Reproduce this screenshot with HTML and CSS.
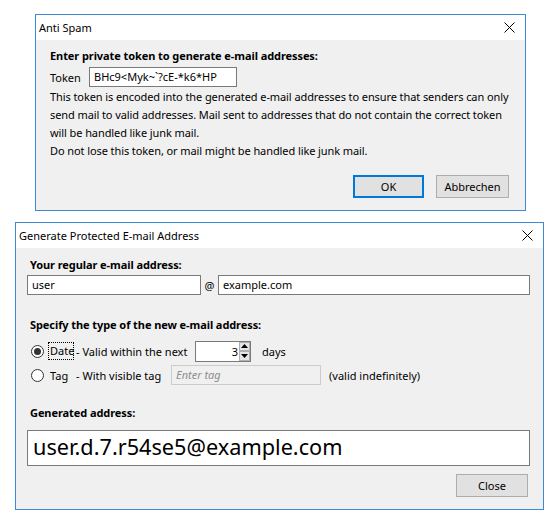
FILE: index.html
```html
<!DOCTYPE html>
<html>
<head>
<meta charset="utf-8">
<link rel="stylesheet" href="styles.css">
</head>
<body>
<div class="page">
  <div class="dialog d1">
    <div class="titlebar">
      <span class="title">Anti Spam</span>
      <svg class="close" width="11" height="11" viewBox="0 0 11 11"><path d="M0.5 0.5L10.5 10.5M10.5 0.5L0.5 10.5" stroke="#000" stroke-width="1"/></svg>
    </div>
    <div class="body b1">
      <div class="heading">Enter private token to generate e-mail addresses:</div>
      <div class="token-row">
        <span class="lbl">Token</span>
        <div class="input token-input">BHc9&lt;Myk~`?cE-*k6*HP</div>
      </div>
      <div class="para">This token is encoded into the generated e-mail addresses to ensure that senders can only<br>send mail to valid addresses. Mail sent to addresses that do not contain the correct token<br>will be handled like junk mail.<br>Do not lose this token, or mail might be handled like junk mail.</div>
      <div class="buttons b1-buttons">
        <div class="btn default w-ok">OK</div>
        <div class="btn w-abb">Abbrechen</div>
      </div>
    </div>
  </div>

  <div class="dialog d2">
    <div class="titlebar">
      <span class="title">Generate Protected E-mail Address</span>
      <svg class="close" width="11" height="11" viewBox="0 0 11 11"><path d="M0.5 0.5L10.5 10.5M10.5 0.5L0.5 10.5" stroke="#000" stroke-width="1"/></svg>
    </div>
    <div class="body b2">
      <div class="heading h-indent">Your regular e-mail address:</div>
      <div class="addr-row">
        <div class="input user-input">user</div>
        <span class="at">@</span>
        <div class="input domain-input">example.com</div>
      </div>
      <div class="heading h-indent sec2">Specify the type of the new e-mail address:</div>
      <div class="opt-row r1">
        <span class="radio checked"></span>
        <span class="focus">Date</span>
        <span class="desc">- Valid within the next</span>
        <div class="spin">
          <div class="input spin-input">3</div>
          <div class="spin-btns">
            <div class="spin-btn"><svg width="7" height="4" viewBox="0 0 7 4"><path d="M3.5 0L7 4H0Z" fill="#000"/></svg></div>
            <div class="spin-btn"><svg width="7" height="4" viewBox="0 0 7 4"><path d="M0 0H7L3.5 4Z" fill="#000"/></svg></div>
          </div>
        </div>
        <span class="days">days</span>
      </div>
      <div class="opt-row r2">
        <span class="radio"></span>
        <span class="tag">Tag</span>
        <span class="desc">- With visible tag</span>
        <div class="input tag-input">Enter tag</div>
        <span class="valid">(valid indefinitely)</span>
      </div>
      <div class="heading h-indent sec3">Generated address:</div>
      <div class="input gen-input">user.d.7.r54se5@example.com</div>
      <div class="buttons b2-buttons">
        <div class="btn w-close">Close</div>
      </div>
    </div>
  </div>
</div>
</body>
</html>
```

FILE: styles.css
```css
html, body {
  margin: 0;
  padding: 0;
  background: #ffffff;
}
body {
  font-family: "Noto Sans", "Open Sans", sans-serif;
  font-size: 11px;
  color: #000;
  width: 559px;
  height: 525px;
  overflow: hidden;
}
.page {
  display: flex;
  flex-direction: column;
  align-items: flex-start;
}
.dialog {
  border: 1px solid #3b8ad6;
  background: #f0f0f0;
  box-sizing: border-box;
  display: flex;
  flex-direction: column;
}
.d1 {
  margin: 14px 0 0 35px;
  width: 491px;
  height: 197px;
}
.d2 {
  margin: 11px 0 0 15px;
  width: 529px;
  height: 288px;
}
.titlebar {
  background: #fff;
  height: 25px;
  display: flex;
  align-items: center;
  justify-content: space-between;
  padding: 0 10px 0 3px;
  flex: none;
}
.title {
  line-height: 18px;
}
.body {
  flex: 1;
  display: flex;
  flex-direction: column;
  align-items: flex-start;
}
.b1 {
  padding: 7px 16px 0 14px;
}
.b2 {
  padding: 8px 13px 0 11px;
}
.heading {
  font-weight: bold;
  line-height: 18px;
  white-space: nowrap;
  letter-spacing: -0.08px;
}
.h-indent {
  padding-left: 3px;
}
.input {
  background: #fff;
  border: 1px solid #7a7a7a;
  box-sizing: border-box;
  height: 20px;
  line-height: 18px;
  padding: 0 4px;
  white-space: nowrap;
  overflow: hidden;
}
.token-row {
  display: flex;
  align-items: center;
  margin-top: 2px;
  height: 20px;
}
.lbl {
  width: 39px;
}
.token-input {
  width: 148px;
}
.para {
  line-height: 18px;
  white-space: nowrap;
  margin-top: 1px;
  letter-spacing: -0.09px;
}
.buttons {
  display: flex;
  gap: 12px;
  align-self: stretch;
  justify-content: flex-end;
}
.b1-buttons {
  margin-top: 15px;
}
.btn {
  height: 23px;
  box-sizing: border-box;
  border: 1px solid #adadad;
  background: #e1e1e1;
  display: flex;
  align-items: center;
  justify-content: center;
}
.btn.default {
  border: 2px solid #0078d7;
}
.w-ok { width: 71px; }
.w-abb { width: 73px; }
.w-close { width: 72px; }
.addr-row {
  display: flex;
  align-items: center;
  margin-top: 1px;
  align-self: stretch;
}
.user-input {
  width: 174px;
}
.at {
  width: 17px;
  text-align: center;
}
.domain-input {
  flex: 1;
}
.sec2 {
  margin-top: 21px;
}
.opt-row {
  display: flex;
  align-items: center;
  padding-left: 4px;
  height: 22px;
  white-space: nowrap;
}
.r1 {
  margin-top: 6px;
}
.r2 {
  margin-top: 2px;
}
.radio {
  flex: none;
  width: 13px;
  height: 13px;
  border: 1px solid #333;
  border-radius: 50%;
  box-sizing: border-box;
  background: #fff;
  position: relative;
}
.r1 .radio { margin-right: 5px; }
.r2 .radio { margin-right: 6px; }
.radio.checked::after {
  content: "";
  position: absolute;
  left: 2px;
  top: 2px;
  width: 7px;
  height: 7px;
  border-radius: 50%;
  background: #333;
}
.focus {
  flex: none;
  box-sizing: border-box;
  width: 24px;
  outline: 1px dotted #000;
  outline-offset: 0;
  line-height: 16px;
  padding-left: 1px;
  margin-right: 3px;
}
.tag {
  flex: none;
  width: 26px;
}
.desc {
  flex: none;
}
.r1 .desc { width: 119px; }
.r2 .desc { width: 95px; }
.spin {
  flex: none;
  display: flex;
  height: 21px;
}
.spin-input {
  width: 44px;
  height: 21px;
  text-align: right;
  padding-right: 1px;
  border-right: none;
  line-height: 19px;
}
.spin-btns {
  width: 12px;
  display: flex;
  flex-direction: column;
  border: 1px solid #7a7a7a;
  border-left: none;
  box-sizing: border-box;
  background: #fff;
}
.spin-btn {
  flex: 1;
  background: #e5e5e5;
  border: 1px solid #b0b0b0;
  display: flex;
  align-items: center;
  justify-content: center;
}
.days {
  margin-left: 11px;
}
.tag-input {
  flex: none;
  width: 150px;
  border-color: #cccccc;
  background: #f0f0f0;
  color: #8d8d8d;
  font-style: italic;
  height: 20px;
}
.valid {
  margin-left: 8px;
}
.sec3 {
  margin-top: 18px;
}
.gen-input {
  margin-top: 8px;
  align-self: stretch;
  height: 36px;
  font-size: 21.7px;
  line-height: 31px;
  padding-left: 5px;
}
.b2-buttons {
  margin-top: 8px;
  padding-right: 2px;
}
```
